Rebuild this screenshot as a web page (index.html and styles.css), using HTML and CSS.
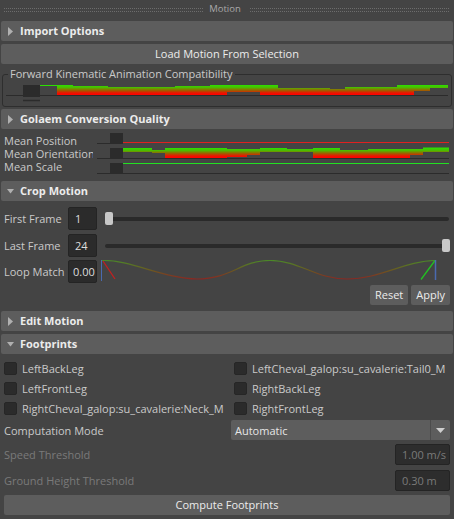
FILE: index.html
```html
<!DOCTYPE html>
<html>
<head>
<meta charset="utf-8">
<link rel="stylesheet" href="styles.css">
</head>
<body>
<div class="panel">
  <div class="titlebar"><span class="grip"></span><span class="title">Motion</span><span class="grip right"></span></div>

  <div class="section-header"><svg class="tri" width="19" height="20" viewBox="0 0 19 20"><polygon points="7,6 7,15 12,10.5" fill="#b0b0b0"/></svg><span>Import Options</span></div>
  <div class="btn load">Load Motion From Selection</div>

  <fieldset class="group">
    <legend>Forward Kinematic Animation Compatibility</legend>
    <svg class="fk" width="447" height="25" viewBox="0 0 447 25">
      <defs>
        <linearGradient id="fkGrad" gradientUnits="userSpaceOnUse" x1="0" y1="85" x2="0" y2="95">
          <stop offset="0" stop-color="#2ce000"/>
          <stop offset="0.25" stop-color="#4cbc00"/>
          <stop offset="0.55" stop-color="#a05c00"/>
          <stop offset="0.8" stop-color="#ee1200"/>
          <stop offset="1" stop-color="#ff0000"/>
        </linearGradient>
      </defs>
      <g transform="translate(-3,-81)">
        <line x1="6" y1="95.5" x2="448" y2="95.5" stroke="#2b2b2b" stroke-width="1"/>
        <g fill="url(#fkGrad)">
          <rect x="57" y="85" width="16" height="10"/>
          <rect x="73" y="86" width="35" height="9"/>
          <rect x="108" y="87" width="67" height="8"/>
          <rect x="175" y="86" width="35" height="9"/>
          <rect x="210" y="85" width="17" height="10"/>
          <rect x="227" y="85" width="33" height="7"/>
          <rect x="260" y="85" width="18" height="10"/>
          <rect x="278" y="88" width="52" height="7"/>
          <rect x="330" y="89" width="15" height="6"/>
          <rect x="345" y="87" width="52" height="8"/>
          <rect x="397" y="85" width="17" height="10"/>
          <rect x="414" y="85" width="16" height="6"/>
          <rect x="430" y="85" width="18" height="3"/>
        </g>
        <line x1="40" y1="85.5" x2="57" y2="85.5" stroke="#2ce000" stroke-width="1"/>
        <rect x="23" y="85" width="17" height="12" fill="#2b2b2b"/>
        <line x1="23" y1="100.5" x2="40" y2="100.5" stroke="#2b2b2b" stroke-width="1.5"/>
      </g>
    </svg>
  </fieldset>

  <div class="section-header tight"><svg class="tri" width="19" height="20" viewBox="0 0 19 20"><polygon points="7,6 7,15 12,10.5" fill="#b0b0b0"/></svg><span>Golaem Conversion Quality</span></div>

  <div class="quality">
    <div class="q-labels">
      <div>Mean Position</div>
      <div>Mean Orientation</div>
      <div>Mean Scale</div>
    </div>
    <svg class="q-graph" width="355" height="45" viewBox="0 0 355 45">
      <defs>
        <linearGradient id="qGrad" gradientUnits="userSpaceOnUse" x1="0" y1="148" x2="0" y2="158">
          <stop offset="0" stop-color="#2ce000"/>
          <stop offset="0.25" stop-color="#4cbc00"/>
          <stop offset="0.55" stop-color="#a05c00"/>
          <stop offset="0.8" stop-color="#ee1200"/>
          <stop offset="1" stop-color="#ff0000"/>
        </linearGradient>
      </defs>
      <g transform="translate(-95,-131)">
        <line x1="97" y1="143.5" x2="110" y2="143.5" stroke="#2b2b2b"/>
        <line x1="123" y1="142.5" x2="449" y2="142.5" stroke="#e02020" stroke-width="1.2"/>
        <rect x="110" y="133" width="13" height="11" fill="#2b2b2b"/>

        <line x1="97" y1="158.5" x2="449" y2="158.5" stroke="#2b2b2b"/>
        <g fill="url(#qGrad)">
          <rect x="123" y="148" width="29" height="4"/>
          <rect x="152" y="150" width="13" height="3"/>
          <rect x="165" y="148" width="62" height="10"/>
          <rect x="227" y="149" width="20" height="8"/>
          <rect x="247" y="149" width="13" height="6"/>
          <rect x="260" y="148" width="27" height="4"/>
          <rect x="287" y="149" width="26" height="3"/>
          <rect x="313" y="148" width="27" height="10"/>
          <rect x="340" y="150" width="28" height="8"/>
          <rect x="368" y="149" width="42" height="9"/>
          <rect x="410" y="149" width="13" height="6"/>
          <rect x="423" y="147.5" width="26" height="4.5"/>
        </g>
        <rect x="110" y="148" width="13" height="11" fill="#2b2b2b"/>

        <line x1="123" y1="163.5" x2="449" y2="163.5" stroke="#22e022" stroke-width="1.2"/>
        <line x1="97" y1="173.5" x2="449" y2="173.5" stroke="#2b2b2b"/>
        <rect x="110" y="163" width="13" height="11" fill="#2b2b2b"/>
      </g>
    </svg>
  </div>

  <div class="section-header"><svg class="tri" width="19" height="20" viewBox="0 0 19 20"><polygon points="6,8 13,8 9.5,12.5" fill="#b0b0b0"/></svg><span>Crop Motion</span></div>

  <div class="crop">
    <div class="frow">
      <span class="flabel">First Frame</span>
      <span class="field">1</span>
      <div class="slider"><div class="track"></div><div class="handle start"></div></div>
    </div>
    <div class="frow">
      <span class="flabel">Last Frame</span>
      <span class="field">24</span>
      <div class="slider"><div class="track"></div><div class="handle end"></div></div>
    </div>
    <div class="frow loop">
      <span class="flabel">Loop Match</span>
      <span class="field clip">0.00</span>
      <svg class="curve" width="348" height="23" viewBox="0 0 348 23">
        <defs>
          <linearGradient id="cGrad" gradientUnits="userSpaceOnUse" x1="0" y1="260" x2="0" y2="280">
            <stop offset="0" stop-color="#4a8a28"/>
            <stop offset="0.5" stop-color="#6a5a20"/>
            <stop offset="1" stop-color="#8e2222"/>
          </linearGradient>
        </defs>
        <g transform="translate(-101,-260)">
          <path d="M102,260.5 C130,259.5 165,279 197,279 C232,279 240,260.5 270,260.5 C300,260.5 315,279 347,279 C380,279 405,261 435,260.5" fill="none" stroke="url(#cGrad)" stroke-width="1.2"/>
          <line x1="103" y1="261" x2="115" y2="279" stroke="#c42020" stroke-width="1.3"/>
          <line x1="101.5" y1="260" x2="101.5" y2="281" stroke="#4a6ab0" stroke-width="1"/>
          <line x1="435" y1="260.5" x2="421" y2="279.5" stroke="#22c022" stroke-width="1.3"/>
          <line x1="435.5" y1="260" x2="435.5" y2="280" stroke="#4a6ab0" stroke-width="1.5"/>
        </g>
      </svg>
    </div>
    <div class="actions">
      <span class="btn small">Reset</span>
      <span class="btn small">Apply</span>
    </div>
  </div>

  <div class="section-header gap6"><svg class="tri" width="19" height="20" viewBox="0 0 19 20"><polygon points="7,6 7,15 12,10.5" fill="#b0b0b0"/></svg><span>Edit Motion</span></div>
  <div class="section-header"><svg class="tri" width="19" height="20" viewBox="0 0 19 20"><polygon points="6,8 13,8 9.5,12.5" fill="#b0b0b0"/></svg><span>Footprints</span></div>

  <div class="checks">
    <label class="check"><span class="box"></span>LeftBackLeg</label>
    <label class="check"><span class="box"></span>LeftCheval_galop:su_cavalerie:Tail0_M</label>
    <label class="check"><span class="box"></span>LeftFrontLeg</label>
    <label class="check"><span class="box"></span>RightBackLeg</label>
    <label class="check"><span class="box"></span>RightCheval_galop:su_cavalerie:Neck_M</label>
    <label class="check"><span class="box"></span>RightFrontLeg</label>
  </div>

  <div class="prow mode">
    <span class="plabel">Computation Mode</span>
    <div class="dropdown"><span class="dd-text">Automatic</span><span class="dd-arrow"><svg width="9" height="5" viewBox="0 0 9 5"><polygon points="0,0 9,0 4.5,5" fill="#cfcfcf"/></svg></span></div>
  </div>
  <div class="prow disabled">
    <span class="plabel">Speed Threshold</span>
    <span class="dfield">1.00 m/s</span>
  </div>
  <div class="prow disabled">
    <span class="plabel">Ground Height Threshold</span>
    <span class="dfield">0.30 m</span>
  </div>
  <div class="btn compute">Compute Footprints</div>
</div>
</body>
</html>
```
FILE: styles.css
```css
* { box-sizing: border-box; }

html, body {
  margin: 0;
  padding: 0;
  background: #444444;
}

body {
  width: 454px;
  height: 519px;
  overflow: hidden;
  font-family: "Open Sans", "Noto Sans", sans-serif;
  font-size: 11px;
  color: #cacaca;
}

.panel {
  display: flex;
  flex-direction: column;
}

/* title bar */
.titlebar {
  height: 18px;
  display: flex;
  align-items: center;
  padding: 0 5px 0 4px;
  gap: 6px;
}
.grip {
  flex: 1;
  height: 4px;
  border-top: 1px dotted #6c6c6c;
  border-bottom: 1px dotted #6c6c6c;
  margin-top: 2px;
}
.grip.right { margin-left: 3px; }
.title {
  font-size: 9.5px;
  color: #a8a8a8;
  line-height: 18px;
}

/* section headers */
.section-header {
  margin: 3px 1px 0;
  height: 20px;
  background: #5d5d5d;
  border-radius: 2px;
  display: flex;
  align-items: center;
  font-weight: bold;
  color: #ececec;
  line-height: 20px;
}
.section-header.tight { margin-top: 2px; }
.section-header.gap6 { margin-top: 6px; }
.tri { flex: none; display: block; }

/* buttons */
.btn {
  background: #5d5d5d;
  color: #ececec;
  border-radius: 2px;
  text-align: center;
}
.load {
  margin: 3px 1px 0;
  height: 20px;
  line-height: 20px;
}
.compute {
  margin: 4px 4px 0;
  height: 20px;
  line-height: 20px;
}

/* FK group */
.group {
  margin: 3px 2px 0;
  padding: 0;
  border: 1px solid #2e2e2e;
  border-radius: 3px;
  min-width: 0;
}
.group legend {
  margin-left: 5px;
  padding: 0 2px;
  line-height: 14px;
  font-size: 11px;
  color: #cacaca;
}
.fk { display: block; }

/* quality */
.quality {
  margin-top: 2px;
  height: 47px;
  display: flex;
}
.q-labels {
  width: 95px;
  padding: 3px 0 0 4px;
  flex: none;
  line-height: 13px;
}
.q-labels div {
  width: 89px;
  overflow-x: clip;
  overflow-y: visible;
  white-space: nowrap;
}
.q-graph { display: block; }

/* crop */
.crop {
  display: flex;
  flex-direction: column;
  padding-top: 6px;
}
.frow {
  display: flex;
  align-items: center;
  height: 23px;
  padding-left: 4px;
}
.frow + .frow { margin-top: 4px; }
.frow.loop { margin-top: 3px; }
.flabel {
  width: 64px;
  flex: none;
}
.field {
  width: 29px;
  height: 23px;
  flex: none;
  background: #2b2b2b;
  border: 1px solid #242424;
  border-radius: 2px;
  padding-left: 6px;
  line-height: 21px;
  color: #dedede;
  overflow: hidden;
  white-space: nowrap;
}
.field.clip { padding-left: 4px; }
.slider {
  position: relative;
  flex: 1;
  height: 23px;
  margin: 0 5px 0 8px;
  display: flex;
  align-items: center;
}
.track {
  flex: 1;
  height: 4px;
  border-radius: 2px;
  background: #2a2a2a;
}
.handle {
  position: absolute;
  top: 5px;
  width: 8px;
  height: 13px;
  border-radius: 2px;
  background: #c8c8c8;
}
.handle.start { left: 0; }
.handle.end { right: -1px; }
.curve {
  display: block;
  margin-left: 4px;
}
.actions {
  display: flex;
  justify-content: flex-end;
  gap: 3px;
  margin-top: 2px;
  padding-right: 4px;
}
.btn.small {
  height: 20px;
  line-height: 20px;
  padding: 0 5px;
}

/* checkboxes */
.checks {
  display: grid;
  grid-template-columns: 230px 1fr;
  grid-auto-rows: 20px;
  padding-left: 4px;
  margin-top: 4px;
}
.check {
  display: flex;
  align-items: center;
  gap: 5px;
  white-space: nowrap;
}
.box {
  width: 13px;
  height: 13px;
  flex: none;
  background: #2b2b2b;
  border: 1px solid #262626;
  border-radius: 2px;
}

/* property rows */
.prow {
  display: flex;
  align-items: center;
  justify-content: space-between;
  padding: 0 4px;
}
.prow.mode {
  margin-top: 2px;
  height: 20px;
}
.prow.disabled {
  margin-top: 4px;
  height: 21px;
}
.prow.disabled + .prow.disabled { margin-top: 5px; }
.prow.disabled .plabel { color: #7a7a7a; }
.dropdown {
  width: 219px;
  height: 20px;
  background: #5d5d5d;
  border-radius: 2px;
  display: flex;
  align-items: center;
}
.dd-text {
  flex: 1;
  padding-left: 4px;
  color: #e6e6e6;
}
.dd-arrow {
  width: 20px;
  height: 20px;
  border-left: 1px solid #4c4c4c;
  display: flex;
  align-items: center;
  justify-content: center;
}
.dd-arrow svg { display: block; }
.dfield {
  width: 55px;
  height: 21px;
  background: #2d2d2d;
  border: 1px solid #242424;
  border-radius: 2px;
  color: #7a7a7a;
  padding-left: 6px;
  line-height: 19px;
  white-space: nowrap;
}
```
